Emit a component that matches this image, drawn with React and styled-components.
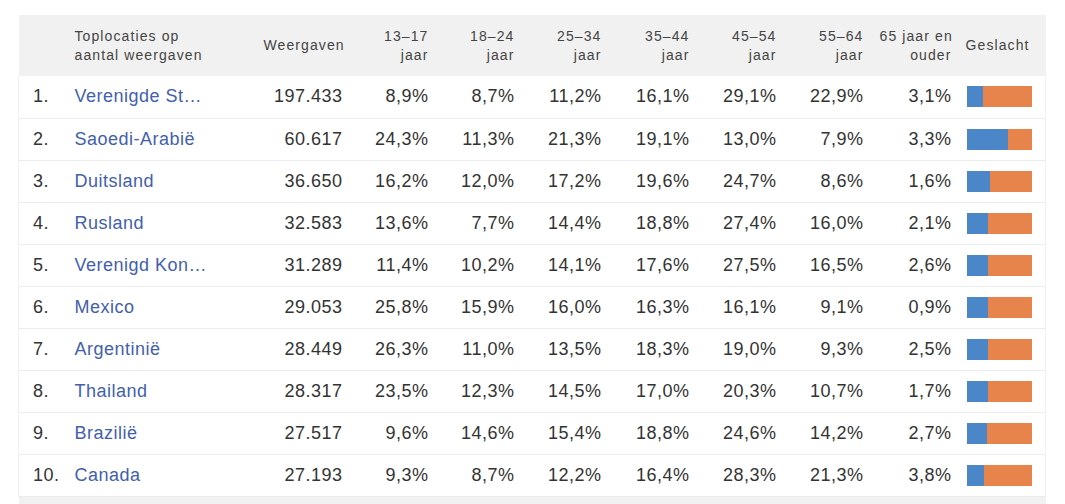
import React from "react";
import styled, { createGlobalStyle } from "styled-components";

const GlobalStyle = createGlobalStyle`
  html, body {
    margin: 0;
    padding: 0;
    background: #fff;
  }
  body {
    font-family: "Liberation Sans", Arial, sans-serif;
  }
`;

const columns = [
  { key: "rank", width: 48 },
  { key: "country", width: 189 },
  { key: "views", width: 95, label: ["Weergaven"] },
  { key: "a1", width: 86, label: ["13–17", "jaar"] },
  { key: "a2", width: 86, label: ["18–24", "jaar"] },
  { key: "a3", width: 87, label: ["25–34", "jaar"] },
  { key: "a4", width: 88, label: ["35–44", "jaar"] },
  { key: "a5", width: 87, label: ["45–54", "jaar"] },
  { key: "a6", width: 87, label: ["55–64", "jaar"] },
  { key: "a7", width: 88, label: ["65 jaar en", "ouder"] },
  { key: "gender", width: 86 },
];

const rows = [
  ["Verenigde St…", "197.433", ["8,9%", "8,7%", "11,2%", "16,1%", "29,1%", "22,9%", "3,1%"], 16],
  ["Saoedi-Arabië", "60.617", ["24,3%", "11,3%", "21,3%", "19,1%", "13,0%", "7,9%", "3,3%"], 41],
  ["Duitsland", "36.650", ["16,2%", "12,0%", "17,2%", "19,6%", "24,7%", "8,6%", "1,6%"], 23],
  ["Rusland", "32.583", ["13,6%", "7,7%", "14,4%", "18,8%", "27,4%", "16,0%", "2,1%"], 21],
  ["Verenigd Kon…", "31.289", ["11,4%", "10,2%", "14,1%", "17,6%", "27,5%", "16,5%", "2,6%"], 21],
  ["Mexico", "29.053", ["25,8%", "15,9%", "16,0%", "16,3%", "16,1%", "9,1%", "0,9%"], 21],
  ["Argentinië", "28.449", ["26,3%", "11,0%", "13,5%", "18,3%", "19,0%", "9,3%", "2,5%"], 21],
  ["Thailand", "28.317", ["23,5%", "12,3%", "14,5%", "17,0%", "20,3%", "10,7%", "1,7%"], 21],
  ["Brazilië", "27.517", ["9,6%", "14,6%", "15,4%", "18,8%", "24,6%", "14,2%", "2,7%"], 20],
  ["Canada", "27.193", ["9,3%", "8,7%", "12,2%", "16,4%", "28,3%", "21,3%", "3,8%"], 17],
];

const BAR_WIDTH = 65;

export default function App() {
  return (
    <>
      <GlobalStyle />
      <Page>
        <Table>
          <colgroup>
            {columns.map((c) => (
              <col key={c.key} style={{ width: c.width }} />
            ))}
          </colgroup>
          <thead>
            <tr>
              <HeadCell />
              <HeadCell $align="left">
                Toplocaties op
                <br />
                aantal weergaven
              </HeadCell>
              {columns.slice(2, 10).map((c) => (
                <HeadCell key={c.key} $align="right">
                  {c.label.map((line, i) => (
                    <React.Fragment key={i}>
                      {i > 0 && <br />}
                      {line}
                    </React.Fragment>
                  ))}
                </HeadCell>
              ))}
              <HeadCell $align="left" $tight>Geslacht</HeadCell>
            </tr>
          </thead>
          <tbody>
            {rows.map(([name, views, ages, male], i) => (
              <Row key={name}>
                <RankCell>{i + 1}.</RankCell>
                <NameCell>
                  <CountryLink href="#">{name}</CountryLink>
                </NameCell>
                <NumCell>{views}</NumCell>
                {ages.map((a, j) => (
                  <NumCell key={j}>{a}</NumCell>
                ))}
                <BarCell>
                  <GenderBar>
                    <Male style={{ width: male }} />
                    <Female />
                  </GenderBar>
                </BarCell>
              </Row>
            ))}
          </tbody>
          <tfoot>
            <tr>
              <FootCell colSpan={columns.length} />
            </tr>
          </tfoot>
        </Table>
      </Page>
    </>
  );
}

//styled components
const Page = styled.div`
  padding: 15px 0 0 18px;
  width: 1027px;
`;

const Table = styled.table`
  width: 1027px;
  table-layout: fixed;
  border-collapse: collapse;
  color: #333;
`;

const HeadCell = styled.th`
  height: 61px;
  padding: 0 ${(p) => (p.$tight ? "0" : "8px")} 0 ${(p) => (p.$tight ? "6px" : "8px")};
  background: #f1f1f1;
  text-align: ${(p) => p.$align || "left"};
  vertical-align: middle;
  font-weight: normal;
  font-size: 14px;
  line-height: 19px;
  letter-spacing: 1.1px;
  color: #444;
  white-space: nowrap;
  &:first-child {
    padding: 0;
  }
`;

const Row = styled.tr`
  height: 42px;
  border-bottom: 1px solid #ececec;
  td {
    height: 41px;
    padding: 0 8px;
    vertical-align: middle;
    font-size: 18px;
    letter-spacing: 0.5px;
    white-space: nowrap;
  }
  td:first-child {
    border-left: 1px solid #f0f0f0;
  }
  td:last-child {
    border-right: 1px solid #f0f0f0;
  }
`;

const RankCell = styled.td`
  && {
    padding-left: 14px;
  }
`;

const NameCell = styled.td`
  && {
    padding-left: 8px;
  }
`;

const CountryLink = styled.a`
  color: #4260ad;
  text-decoration: none;
`;

const NumCell = styled.td`
  text-align: right;
`;

const BarCell = styled.td`
  && {
    padding: 0 0 0 7px;
  }
`;

const GenderBar = styled.div`
  display: flex;
  width: ${BAR_WIDTH}px;
  height: 21px;
`;

const Male = styled.div`
  background: #4b86c9;
`;

const Female = styled.div`
  flex: 1;
  background: #e6844c;
`;

const FootCell = styled.td`
  height: 10px;
  padding: 0;
  background: #f1f1f1;
`;
